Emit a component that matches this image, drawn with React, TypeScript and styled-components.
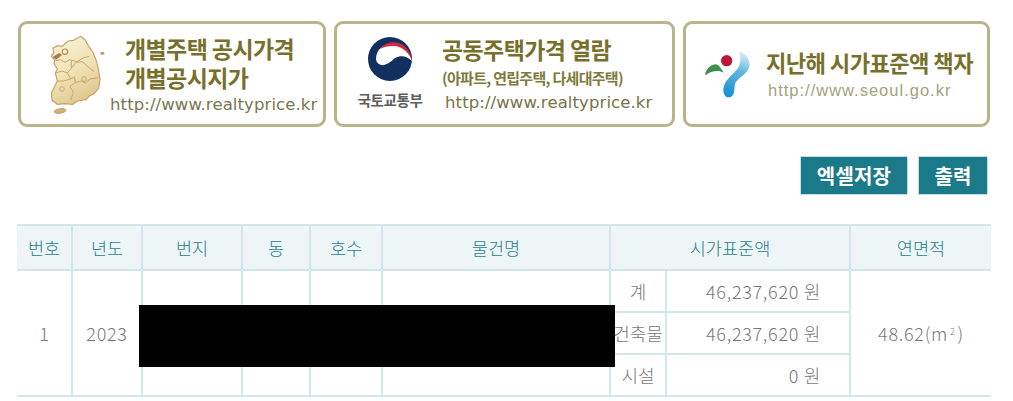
import React from "react";
import styled, { createGlobalStyle } from "styled-components";

const Global = createGlobalStyle`
  html, body { margin: 0; padding: 0; background: #fff; overflow: hidden; }
  body { font-family: "Noto Sans CJK KR", "Open Sans", sans-serif; }
`;

const Page = styled.div`
  position: relative;
  width: 1013px;
  height: 401px;
  padding: 21px 22px 0 18px;
  box-sizing: border-box;
  overflow: hidden;
`;

const Banners = styled.div`
  display: flex;
  gap: 8px;
  height: 106px;
`;

const Banner = styled.a<{ $w: number }>`
  width: ${(p) => p.$w}px;
  height: 106px;
  box-sizing: border-box;
  border: 3px solid #b8b58a;
  border-radius: 9px;
  background: #fff;
  display: flex;
  align-items: center;
  flex: none;
  text-decoration: none;
`;

const LogoSlot = styled.div<{ $w: number; $ml: number; $mb?: number }>`
  width: ${(p) => p.$w}px;
  margin-left: ${(p) => p.$ml}px;
  margin-bottom: ${(p) => p.$mb ?? 0}px;
  flex: none;
  display: flex;
  flex-direction: column;
  align-items: center;
`;

const BannerText = styled.div<{ $ml: number }>`
  margin-left: ${(p) => p.$ml}px;
  display: flex;
  flex-direction: column;
  white-space: nowrap;
`;

const Title = styled.div<{ $size?: number }>`
  font-size: ${(p) => p.$size ?? 23}px;
  line-height: 29px;
  font-weight: 700;
  letter-spacing: -0.6px;
  color: #77702a;
`;

const Sub = styled.div`
  font-size: 15px;
  line-height: 22px;
  font-weight: 700;
  letter-spacing: -0.7px;
  color: #7d7a3c;
  margin-top: 3px;
`;

const Url = styled.div<{ $color?: string; $size?: number; $ml?: number; $mt?: number; $ls?: number; $font?: string }>`
  font-family: ${(p) => p.$font ?? '"DejaVu Sans"'}, sans-serif;
  font-size: ${(p) => p.$size ?? 16.5}px;
  line-height: 20px;
  letter-spacing: ${(p) => p.$ls ?? 0.1}px;
  color: ${(p) => p.$color ?? "#77774f"};
  margin-left: ${(p) => p.$ml ?? 0}px;
  margin-top: ${(p) => p.$mt ?? 0}px;
`;

const Ministry = styled.div`
  font-size: 14.5px;
  line-height: 16px;
  font-weight: 700;
  letter-spacing: -0.4px;
  color: #5c5c5c;
  margin-top: 10px;
`;

const Actions = styled.div`
  display: flex;
  justify-content: flex-end;
  gap: 10px;
  margin: 29px 3px 29px 0;
`;

const ActionButton = styled.button<{ $w: number }>`
  width: ${(p) => p.$w}px;
  height: 39px;
  padding: 0;
  border: 1px solid #c4e0e6;
  background: #1b7a8a;
  color: #fff;
  font-family: inherit;
  font-size: 20px;
  font-weight: 700;
  letter-spacing: 0.2px;
`;

const Table = styled.table`
  width: 974px;
  margin-left: -1px;
  table-layout: fixed;
  border-collapse: collapse;
  border-top: 2px solid #d3e6e9;
  border-bottom: 2px solid #d3e6e9;
  font-size: 18px;
  font-weight: 300;
  color: #777;
`;

const Th = styled.th`
  height: 43px;
  padding: 0;
  background: #eef5f7;
  border: 2px solid #d3e6e9;
  border-top: 0;
  font-weight: 300;
  font-size: 17.5px;
  color: #1f8090;
  &:first-child { border-left: 0; }
  &:last-child { border-right: 0; }
`;

const Td = styled.td<{ $right?: boolean }>`
  height: 40px;
  padding: 0 ${(p) => (p.$right ? "28px" : "0")} 0 0;
  border: 2px solid #d3e6e9;
  text-align: ${(p) => (p.$right ? "right" : "center")};
  white-space: nowrap;
  &:first-child { border-left: 0; }
  &:last-child { border-right: 0; }
`;

const Figure = styled.span`
  letter-spacing: 0.7px;
`;

const Redaction = styled.div`
  position: absolute;
  left: 139px;
  top: 305px;
  width: 476px;
  height: 62px;
  background: #000;
`;

const Sup = styled.span`
  font-size: 9px;
  vertical-align: 6px;
  margin: 0 2px;
`;

const KoreaMap = () => (
  <svg width="70" height="90" viewBox="0 0 210 270">
    <defs>
      <linearGradient id="km" x1="0.2" y1="0" x2="0.6" y2="1">
        <stop offset="0" stopColor="#f8f1d6" />
        <stop offset="0.55" stopColor="#f0e1b4" />
        <stop offset="1" stopColor="#e0c68c" />
      </linearGradient>
    </defs>
    <path
      d="M122 22 L135 32 L146 52 L160 72 L170 98 L176 125 L180 150 L176 178 L162 194 L150 200 L138 212 L112 216 L98 226 L74 224 L52 226 L36 214 L34 192 L44 172 L52 156 L46 132 L52 120 L42 104 L44 94 L34 82 L42 70 L38 58 L52 50 L66 52 L84 36 L100 34 Z"
      fill="url(#km)"
      stroke="#c4a468"
      strokeWidth="3.5"
    />
    <path
      d="M46 95 L62 92 L76 100 L88 92 L110 98 L132 86 L148 82 M94 96 L94 118 M94 118 L82 132 L92 150 L104 144 L106 160 M94 118 L108 100 L126 98 L136 106 L152 120 L162 128 M46 132 L66 126 L82 132 M92 150 L70 156 L52 156 M106 160 L90 172 L100 190 L92 214 M106 160 L124 156 L136 162 L150 150 L176 146"
      fill="none"
      stroke="#c8a86c"
      strokeWidth="3"
    />
    <circle cx="75" cy="68" r="8" fill="#f6eecd" stroke="#b08f52" strokeWidth="3.5" />
    <path d="M38 84 L58 72 L66 78 L48 92 Z" fill="#a67c45" />
    <circle cx="66" cy="180" r="7" fill="none" stroke="#c8a86c" strokeWidth="3" />
    <circle cx="132" cy="150" r="7" fill="none" stroke="#c8a86c" strokeWidth="3" />
    <ellipse cx="60" cy="246" rx="18" ry="7" transform="rotate(-8 60 246)" fill="#d2b274" stroke="#b5935a" strokeWidth="2" />
    <ellipse cx="187" cy="73" rx="6" ry="4.5" fill="#b39a78" />
  </svg>
);

const Taegeuk = () => (
  <svg width="46" height="46" viewBox="0 0 46 46">
    <circle cx="23" cy="23" r="22" fill="#12305f" />
    <path d="M9 23 C9 13 17 8 25 8 C35 8 43 15 45 25 C40 20 34 19 28 22 C24 26 18 30 14 29 C11 28 9 26 9 23 Z" fill="#fff" />
    <path d="M13 13 C18 6 28 4 36 9 C41 13 45 19 45 25 C43 18 36 10 26 10 C21 10 16 11 13 13 Z" fill="#cf2a40" />
  </svg>
);

const SeoulLogo = () => (
  <svg width="70" height="70" viewBox="0 0 210 210">
    <defs>
      <linearGradient id="sl" x1="0.6" y1="0" x2="0.4" y2="1">
        <stop offset="0" stopColor="#d5ecf6" />
        <stop offset="0.4" stopColor="#62b7e3" />
        <stop offset="1" stopColor="#1b8fd3" />
      </linearGradient>
    </defs>
    <circle cx="95" cy="65" r="17" fill="#bb1838" />
    <path d="M30 107 C34 90 46 78 60 76 C72 75 78 90 87 101 C70 92 50 95 32 108 Z" fill="#3f8f4e" />
    <path
      d="M132 38 C152 40 166 60 163 82 C158 105 135 112 122 130 C116 142 122 160 112 170 C102 180 86 174 85 155 C84 128 108 112 124 94 C136 80 140 58 132 38 Z"
      fill="url(#sl)"
    />
  </svg>
);

export default function App() {
  return (
    <Page>
      <Global />
      <Banners>
        <Banner $w={308}>
          <LogoSlot $w={70} $ml={19}>
            <KoreaMap />
          </LogoSlot>
          <BannerText $ml={15}>
            <Title>
              개별주택 공시가격
              <br />
              개별공시지가
            </Title>
            <Url $ml={-15} $mt={3}>http://www.realtyprice.kr</Url>
          </BannerText>
        </Banner>
        <Banner $w={341}>
          <LogoSlot $w={70} $ml={18} $mb={4}>
            <Taegeuk />
            <Ministry>국토교통부</Ministry>
          </LogoSlot>
          <BannerText $ml={17}>
            <Title>공동주택가격 열람</Title>
            <Sub>(아파트, 연립주택, 다세대주택)</Sub>
            <Url $color="#777445" $ml={3} $mt={4}>http://www.realtyprice.kr</Url>
          </BannerText>
        </Banner>
        <Banner $w={307}>
          <LogoSlot $w={70} $ml={9}>
            <SeoulLogo />
          </LogoSlot>
          <BannerText $ml={1}>
            <Title $size={22.2}>지난해 시가표준액 책자</Title>
            <Url $color="#a3a27c" $font='"Liberation Sans"' $size={16.5} $ls={1} $ml={2} $mt={3}>http://www.seoul.go.kr</Url>
          </BannerText>
        </Banner>
      </Banners>
      <Actions>
        <ActionButton $w={108}>엑셀저장</ActionButton>
        <ActionButton $w={70}>출력</ActionButton>
      </Actions>
      <Table>
        <colgroup>
          <col width="55" />
          <col width="70" />
          <col width="100" />
          <col width="68" />
          <col width="72" />
          <col width="228" />
          <col width="56" />
          <col width="184" />
          <col width="141" />
        </colgroup>
        <thead>
          <tr>
            <Th>번호</Th>
            <Th>년도</Th>
            <Th>번지</Th>
            <Th>동</Th>
            <Th>호수</Th>
            <Th>물건명</Th>
            <Th colSpan={2}>시가표준액</Th>
            <Th>연면적</Th>
          </tr>
        </thead>
        <tbody>
          <tr>
            <Td rowSpan={3}>1</Td>
            <Td rowSpan={3}><Figure>2023</Figure></Td>
            <Td rowSpan={3} />
            <Td rowSpan={3} />
            <Td rowSpan={3} />
            <Td rowSpan={3} />
            <Td>계</Td>
            <Td $right><Figure>46,237,620 원</Figure></Td>
            <Td rowSpan={3}><Figure>48.62(m<Sup>2</Sup>)</Figure></Td>
          </tr>
          <tr>
            <Td>건축물</Td>
            <Td $right><Figure>46,237,620 원</Figure></Td>
          </tr>
          <tr>
            <Td>시설</Td>
            <Td $right><Figure>0 원</Figure></Td>
          </tr>
        </tbody>
      </Table>
      <Redaction />
    </Page>
  );
}
